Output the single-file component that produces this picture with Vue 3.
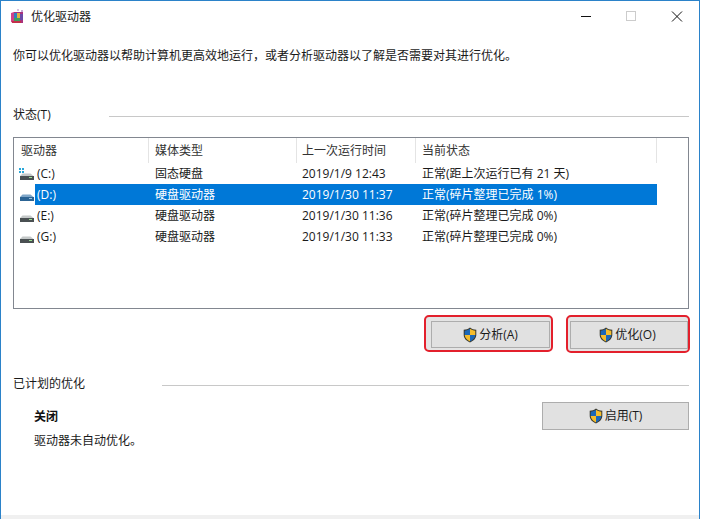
<script setup>
const rows = [
  { id: 'c', drive: '(C:)', media: '固态硬盘', time: '2019/1/9 12:43', status: '正常(距上次运行已有 21 天)' },
  { id: 'd', drive: '(D:)', media: '硬盘驱动器', time: '2019/1/30 11:37', status: '正常(碎片整理已完成 1%)', selected: true },
  { id: 'e', drive: '(E:)', media: '硬盘驱动器', time: '2019/1/30 11:36', status: '正常(碎片整理已完成 0%)' },
  { id: 'g', drive: '(G:)', media: '硬盘驱动器', time: '2019/1/30 11:33', status: '正常(碎片整理已完成 0%)' }
]
const headers = ['驱动器', '媒体类型', '上一次运行时间', '当前状态']
</script>

<template>
  <div class="window">
    <svg class="defs" width="0" height="0" aria-hidden="true">
      <symbol id="shield" viewBox="0 0 14 16">
        <path d="M7 .5C5.200 2 3 2.700.7 2.800v5c0 3.600 2.600 6.200 6.300 7.700 3.700-1.500 6.300-4.100 6.300-7.700v-5C11 2.700 8.800 2 7 .5z" fill="#3a3a30" />
        <path d="M7 1.700C5.500 2.800 3.600 3.500 1.700 3.700V8H7z" fill="#1c68b8" />
        <path d="M7 1.700V8h5.300V3.700C10.400 3.500 8.500 2.800 7 1.700z" fill="#f5bd2c" />
        <path d="M1.700 8C1.900 10.900 4 13 7 14.400V8z" fill="#f5bd2c" />
        <path d="M7 8v6.400c3-1.400 5.100-3.500 5.300-6.400z" fill="#1c68b8" />
      </symbol>
    </svg>

    <header class="titlebar">
      <svg class="app-icon" width="15" height="15" viewBox="0 0 15 15" aria-hidden="true">
        <path d="M1 4l3-1v11l-3-1z" fill="#d0408a" />
        <rect x="4" y="3" width="9" height="11" fill="#a8327e" />
        <rect x="4" y="4" width="3" height="5" fill="#2f7fc0" />
        <rect x="7" y="4" width="3" height="5" fill="#e0b040" />
        <rect x="10" y="5" width="3" height="6" fill="#6a4aa8" />
        <rect x="4" y="9" width="6" height="3" fill="#3f9f5e" />
        <rect x="11" y="1" width="2" height="2" fill="#c9a8d8" />
        <rect x="7" y="0" width="2" height="2" fill="#d8c0e0" />
        <rect x="2" y="12" width="9" height="2" fill="#c2304a" />
      </svg>
      <span class="title">优化驱动器</span>
      <div class="controls">
        <svg width="12" height="12" viewBox="0 0 12 12" aria-hidden="true"><path d="M0 5.500h10" stroke="#111" stroke-width="1" /></svg>
        <svg width="12" height="12" viewBox="0 0 12 12" aria-hidden="true"><rect x=".5" y=".5" width="9" height="9" fill="none" stroke="#ccc" /></svg>
        <svg width="12" height="12" viewBox="0 0 12 12" aria-hidden="true"><path d="M1 .5l10 10M11 .5l-10 10" stroke="#111" stroke-width="1" /></svg>
      </div>
    </header>

    <main class="content">
      <p class="intro">你可以优化驱动器以帮助计算机更高效地运行，或者分析驱动器以了解是否需要对其进行优化。</p>

      <div class="section-head status-head">
        <span>状态(T)</span><i class="rule"></i>
      </div>

      <section class="list">
        <div class="list-header">
          <div v-for="h in headers" :key="h" class="header-cell">{{ h }}</div>
        </div>
        <div v-for="r in rows" :key="r.id" class="row" :class="{ selected: r.selected }">
          <div class="icon-cell">
            <svg width="15" height="13" viewBox="0 0 15 13" aria-hidden="true">
              <g v-if="r.id === 'c'" fill="#2aa7d8">
                <rect x="0" y="0" width="2" height="2" /><rect x="3" y="0" width="2" height="2" />
                <rect x="0" y="3" width="2" height="2" /><rect x="3" y="3" width="2" height="2" />
              </g>
              <path d="M1 8L3.500 5.500h8L14.500 8z" :fill="r.selected ? '#7fa6c8' : '#c4c8c8'" />
              <rect x="1" y="8" width="14" height="4" :fill="r.selected ? '#2c6494' : '#4a5052'" />
              <rect x="10" y="9" width="3" height="1" :fill="r.selected ? '#9cc4e0' : '#9adf90'" />
            </svg>
          </div>
          <div class="cell drive">{{ r.drive }}</div>
          <div class="cell media">{{ r.media }}</div>
          <div class="cell time">{{ r.time }}</div>
          <div class="cell state">{{ r.status }}</div>
        </div>
      </section>

      <div class="actions">
        <div class="mark mark-a">
          <button class="btn" type="button"><svg class="shield" width="14" height="16" aria-hidden="true"><use href="#shield" /></svg>分析(A)</button>
        </div>
        <div class="mark mark-b">
          <button class="btn" type="button"><svg class="shield" width="14" height="16" aria-hidden="true"><use href="#shield" /></svg>优化(O)</button>
        </div>
      </div>

      <div class="section-head plan-head">
        <span>已计划的优化</span><i class="rule"></i>
      </div>

      <section class="plan">
        <div class="plan-text">
          <div class="plan-title">关闭</div>
          <div class="plan-desc">驱动器未自动优化。</div>
        </div>
        <button class="btn enable" type="button"><svg class="shield" width="14" height="16" aria-hidden="true"><use href="#shield" /></svg>启用(T)</button>
      </section>
    </main>

    <footer class="bottom"></footer>
  </div>
</template>

<style>
html, body { margin: 0; background: #fff; overflow: hidden; }
</style>

<style scoped>
.window {
  width: 700px;
  height: 519px;
  box-sizing: border-box;
  border: 1px solid #2b82c9;
  border-bottom: 0;
  display: flex;
  flex-direction: column;
  background: #fff;
  color: #1a1a1a;
  font: 12px/16px "Open Sans", "Noto Sans CJK SC", sans-serif;
}
.defs { position: absolute; }
.titlebar {
  height: 29px;
  flex: none;
  display: flex;
  align-items: center;
  padding: 1px 0 0 9px;
}
.app-icon { margin-right: 6px; }
.title { flex: 1; }
.controls {
  display: flex;
  gap: 33px;
  padding-right: 16px;
}
.content {
  flex: 1;
  display: flex;
  flex-direction: column;
  padding: 0 10px 0 12px;
  min-height: 0;
}
.intro { margin: 17px 0 0; }
.section-head {
  display: flex;
  align-items: center;
}
.status-head { margin-top: 43px; gap: 58px; }
.plan-head { margin-top: 23px; gap: 77px; }
.rule {
  flex: 1;
  height: 1px;
  background: #c8c8c8;
  margin-top: 2px;
}
.list {
  margin-top: 14px;
  height: 172px;
  box-sizing: border-box;
  border: 1px solid #828790;
  flex: none;
}
.list-header {
  display: grid;
  grid-template-columns: 135px 148px 119px 241px;
  height: 25px;
}
.header-cell {
  padding: 5px 0 0 6px;
  border-right: 1px solid #e4e4e4;
  box-sizing: border-box;
  color: #333;
}
.header-cell:first-child { padding-left: 7px; }
.header-cell:nth-child(3) { padding-left: 5px; }
.row {
  display: grid;
  grid-template-columns: 21px 113px 148px 119px 242px;
  height: 21px;
  line-height: 21px;
}
.icon-cell {
  display: flex;
  align-items: center;
  padding-left: 5px;
  padding-top: 1px;
}
.icon-cell svg { flex: none; }
.cell { white-space: nowrap; padding-left: 7px; }
.drive { padding-left: 2px; }
.time { padding-left: 6px; }
.state { padding-left: 7px; }
.selected .cell { background: #0078d7; color: #fff; }
.actions {
  display: flex;
  justify-content: flex-end;
  align-items: flex-start;
  gap: 13px;
  margin-top: 6px;
  margin-right: -1px;
  flex: none;
}
.mark {
  box-sizing: border-box;
  border: 2px solid #e3202c;
  border-radius: 5px;
  background: #e4e4e4;
  display: flex;
}
.mark-a { width: 129px; height: 37px; padding: 4px 1px 2px 5px; }
.mark-b { width: 124px; height: 38px; padding: 4px 0 2px 2px; }
.mark-b .btn { padding-right: 3px; }
.btn {
  flex: 1;
  box-sizing: border-box;
  border: 1px solid #adadad;
  background: #e1e1e1;
  font: inherit;
  color: #1a1a1a;
  padding: 0;
  display: flex;
  align-items: center;
  justify-content: center;
}
.shield { margin-right: 2px; flex: none; }
.plan {
  display: flex;
  justify-content: space-between;
  align-items: flex-start;
  padding-left: 21px;
  margin-top: 9px;
}
.plan-text { padding-top: 8px; }
.plan-title { font-weight: 700; color: #111; }
.plan-desc { margin-top: 8px; }
.enable {
  flex: none;
  width: 147px;
  height: 28px;
  margin-top: 1px;
}
.bottom {
  height: 4px;
  flex: none;
  background: #f0f0f0;
}
</style>
